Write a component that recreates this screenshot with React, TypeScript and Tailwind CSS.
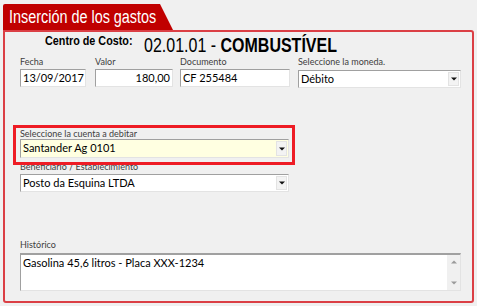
import React from "react";

const ui = { fontFamily: "Lato, 'Liberation Sans', sans-serif" };
const sans = { fontFamily: "'Liberation Sans', Arial, sans-serif" };

function Label({ children, className = "" }: { children: React.ReactNode; className?: string }) {
  return (
    <div className={`h-[11px] text-[9px] leading-[11px] text-[#404040] whitespace-nowrap ${className}`} style={ui}>
      {children}
    </div>
  );
}

function Arrow() {
  return (
    <svg width="6" height="4" viewBox="0 0 6 4">
      <path d="M0 0.5 H6 L3 3.5 Z" fill="#111" />
    </svg>
  );
}

function Box({
  value,
  right = false,
  select = false,
  bg = "bg-white",
  className = "",
}: {
  value: string;
  right?: boolean;
  select?: boolean;
  bg?: string;
  className?: string;
}) {
  return (
    <div
      className={`flex h-[18px] items-stretch border border-t-[#a0a0a0] border-l-[#a0a0a0] border-r-[#e3e3e3] border-b-[#e3e3e3] ${bg} ${className}`}
    >
      <div
        className={`flex flex-1 items-center px-[2px] text-[11px] text-black whitespace-nowrap ${right ? "justify-end" : ""}`}
        style={ui}
      >
        {value}
      </div>
      {select && (
        <div className="m-[1px] flex w-[11px] items-center justify-center border border-[#e3e3e3] bg-[#f3f3f3]">
          <Arrow />
        </div>
      )}
    </div>
  );
}

export default function App() {
  return (
    <div className="h-[306px] w-[477px] overflow-hidden bg-[#f0f0f0] pt-[4px]">
      <div className="ml-[3px] flex h-[26px] w-[170px] items-center bg-[#c00000] pl-[6px] pb-[1px] [clip-path:polygon(0_0,157px_0,170px_100%,0_100%)] rounded-tl-[2px]">
        <span className="block origin-left scale-x-[0.8] whitespace-nowrap text-[18px] leading-none text-white" style={sans}>
          Inserción de los gastos
        </span>
      </div>
      <div className="ml-[3px] h-[273px] w-[471px] rounded-[3px] rounded-tl-none border-2 border-[#db3f45] pl-[15px]">
        <div className="mt-[2px] flex items-start pl-[25px]">
          <div className="w-[86px] shrink-0">
            <span className="block origin-left scale-x-[0.83] whitespace-nowrap text-[13px] font-bold leading-[13px] text-black" style={sans}>
              Centro de Costo:
            </span>
          </div>
          <div className="ml-[13px] mt-[1px]">
            <span className="block origin-left scale-x-[0.8] whitespace-nowrap text-[20px] leading-[20px] text-black" style={sans}>
              02.01.01 - <span className="font-bold">COMBUSTÍVEL</span>
            </span>
          </div>
        </div>

        <div className="mt-[1px] flex">
          <div className="w-[66px]">
            <Label>Fecha</Label>
            <Box value="13/09/2017" className="mt-[2px]" />
          </div>
          <div className="ml-[9px] w-[78px]">
            <Label>Valor</Label>
            <Box value="180,00" right className="mt-[2px]" />
          </div>
          <div className="ml-[7px] w-[110px]">
            <Label>Documento</Label>
            <Box value="CF 255484" className="mt-[2px]" />
          </div>
          <div className="ml-[8px] w-[163px]">
            <Label>Seleccione la moneda.</Label>
            <Box value="Débito" select className="mt-[3px]" />
          </div>
        </div>

        <div className="relative z-10 -ml-[7px] mt-[37px] w-[282px] border-[3px] border-[#ee1c25] pl-[4px] pr-[3px] pb-[4px]">
          <Label>Seleccione la cuenta a debitar</Label>
          <Box value="Santander Ag 0101" select bg="bg-[#ffffe1]" className="h-[19px]" />
        </div>

        <div className="-mt-[4px] w-[269px]">
          <Label>Beneficiario / Establecimiento</Label>
          <Box value="Posto da Esquina LTDA" select className="mt-[2px]" />
        </div>

        <div className="mt-[47px] w-[441px]">
          <Label>Histórico</Label>
          <div className="mt-[3px] flex h-[38px] border border-t-2 border-t-[#a0a0a0] border-l-[#a0a0a0] border-r-[#e3e3e3] border-b-[#e3e3e3] bg-white">
            <div className="flex-1 px-[2px] pt-[1px] text-[11px] leading-[14px] text-black" style={ui}>
              Gasolina 45,6 litros - Placa XXX-1234
            </div>
            <div className="flex w-[13px] flex-col items-center justify-between bg-[#f0f0f0] py-[5px]">
              <svg width="6" height="4" viewBox="0 0 6 4">
                <path d="M0 3.5 H6 L3 0.5 Z" fill="#9a9a9a" />
              </svg>
              <svg width="6" height="4" viewBox="0 0 6 4">
                <path d="M0 0.5 H6 L3 3.5 Z" fill="#9a9a9a" />
              </svg>
            </div>
          </div>
        </div>
      </div>
    </div>
  );
}
